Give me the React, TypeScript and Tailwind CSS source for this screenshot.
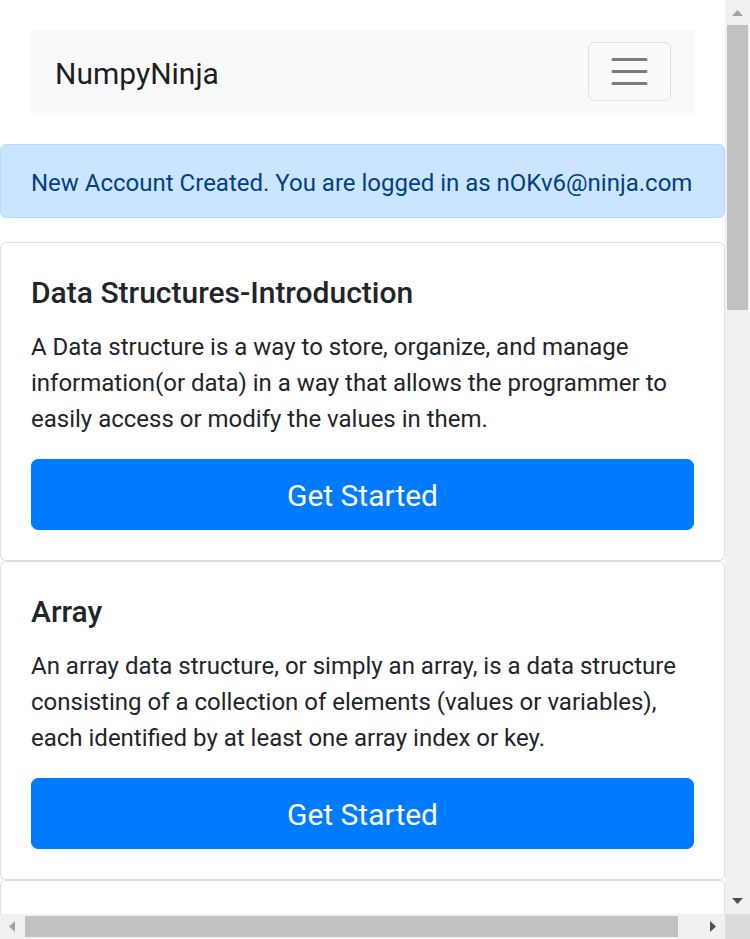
const font = { fontFamily: 'Roboto, "Noto Sans", sans-serif' }

const topics = [
  {
    title: 'Data Structures-Introduction',
    text: 'A Data structure is a way to store, organize, and manage information(or data) in a way that allows the programmer to easily access or modify the values in them.',
  },
  {
    title: 'Array',
    text: 'An array data structure, or simply an array, is a data structure consisting of a collection of elements (values or variables), each identified by at least one array index or key.',
  },
]

function Navbar() {
  return (
    <nav className="mt-[30px] ml-[30px] w-[665px] h-[83px] shrink-0 bg-[#f8f9fa] px-6 py-3 flex items-center justify-between">
      <a className="text-[30px] leading-[45px] text-black/90 pl-px mt-[4px]">NumpyNinja</a>
      <button className="w-[83px] h-[59px] border border-black/10 rounded-[6px] flex items-center justify-center">
        <svg width="45" height="45" viewBox="0 0 30 30">
          <path
            d="M4 7h22M4 15h22M4 23h22"
            stroke="rgba(0,0,0,0.5)"
            strokeWidth="2"
            strokeLinecap="round"
            strokeMiterlimit="10"
          />
        </svg>
      </button>
    </nav>
  )
}

function Card({ title, text }: { title: string; text: string }) {
  return (
    <div className="border border-black/[0.125] rounded-[6px] p-[30px] shrink-0 bg-white">
      <h5 className="text-[30px] font-medium leading-[36px] text-[#212529] pt-[2px] mb-[16px]">{title}</h5>
      <p className="text-[24px] leading-[36px] text-[#212529] pt-[2px] mb-[22px]">{text}</p>
      <button className="w-full h-[71px] bg-[#007bff] border border-[#007bff] rounded-[7px] text-white text-[30px] leading-[45px] pt-[2px]">
        Get Started
      </button>
    </div>
  )
}

function VScrollbar() {
  return (
    <div className="w-[25px] bg-[#f1f1f1] flex flex-col shrink-0">
      <div className="h-[25px] flex items-start justify-center pt-[10px]">
        <svg width="11" height="6" viewBox="0 0 11 6">
          <path d="M5.5 0L11 6H0z" fill="#a3a3a3" />
        </svg>
      </div>
      <div className="mx-[2px] h-[285px] bg-[#c1c1c1]" />
      <div className="flex-1" />
      <div className="h-[25px] flex items-start justify-center pt-[9px]">
        <svg width="11" height="6" viewBox="0 0 11 6">
          <path d="M0 0H11L5.5 6z" fill="#505050" />
        </svg>
      </div>
    </div>
  )
}

function HScrollbar() {
  return (
    <div className="h-[25px] flex shrink-0">
      <div className="w-[725px] bg-[#f1f1f1] flex items-stretch">
        <div className="w-[25px] flex items-center justify-start pl-[9px]">
          <svg width="6" height="11" viewBox="0 0 6 11">
            <path d="M0 5.5L6 0V11z" fill="#a3a3a3" />
          </svg>
        </div>
        <div className="w-[653px] my-[2px] bg-[#c1c1c1]" />
        <div className="flex-1 flex items-center justify-start pl-[32px]">
          <svg width="6" height="11" viewBox="0 0 6 11">
            <path d="M6 5.5L0 0V11z" fill="#505050" />
          </svg>
        </div>
      </div>
      <div className="w-[25px] bg-[#dcdcdc]" />
    </div>
  )
}

export default function App() {
  return (
    <div className="w-[750px] h-[939px] flex flex-col overflow-hidden bg-white" style={font}>
      <div className="flex flex-1 min-h-0">
        <div className="w-[725px] flex flex-col overflow-hidden">
          <Navbar />
          <div className="mt-[31px] mb-6 shrink-0 bg-[#cce5ff] border border-[#b8daff] rounded-[6px] px-[30px] pt-[20px] pb-[16px] text-[#004085] text-[24px] leading-[36px]">
            New Account Created. You are logged in as nOKv6@ninja.com
          </div>
          {topics.map((t) => (
            <Card key={t.title} title={t.title} text={t.text} />
          ))}
          {/* next topic card, only its top edge is in view */}
          <div className="h-[80px] shrink-0 border border-black/[0.125] rounded-[6px] bg-white" />
        </div>
        <VScrollbar />
      </div>
      <HScrollbar />
    </div>
  )
}
